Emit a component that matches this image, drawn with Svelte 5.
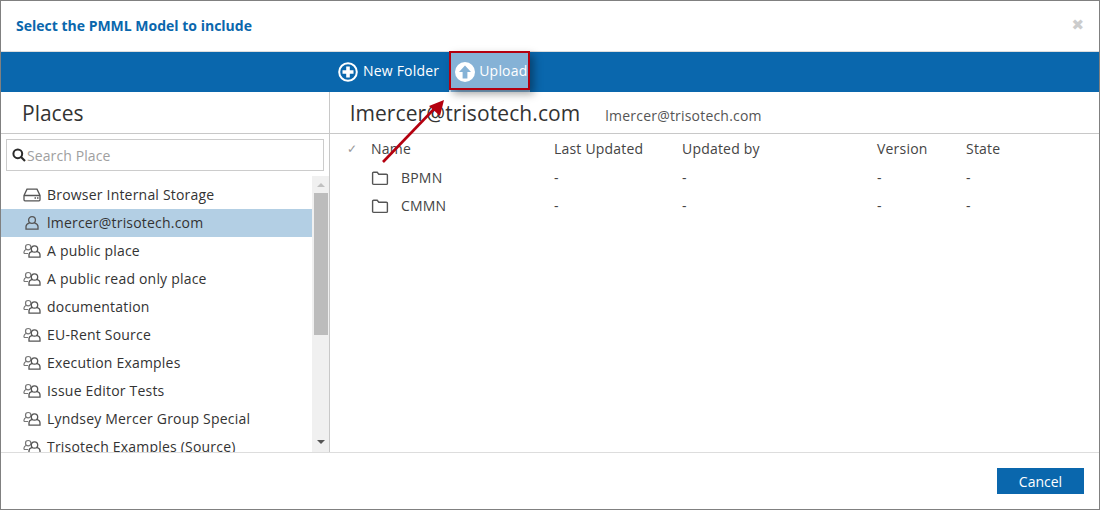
<script lang="ts">
	const places = [
		{ label: "Browser Internal Storage", icon: "drive" },
		{ label: "lmercer@trisotech.com", icon: "user", active: true },
		{ label: "A public place", icon: "group" },
		{ label: "A public read only place", icon: "group" },
		{ label: "documentation", icon: "group" },
		{ label: "EU-Rent Source", icon: "group" },
		{ label: "Execution Examples", icon: "group" },
		{ label: "Issue Editor Tests", icon: "group" },
		{ label: "Lyndsey Mercer Group Special", icon: "group" },
		{ label: "Trisotech Examples (Source)", icon: "group" },
	];

	const folders = ["BPMN", "CMMN"];
</script>

<div class="dialog">
	<header class="title-bar">
		<h1>Select the PMML Model to include</h1>
		<span class="close">✖</span>
	</header>

	<div class="toolbar">
		<button type="button" class="tool new-folder">
			<svg width="20" height="20" viewBox="0 0 20 20">
				<circle cx="10" cy="10" r="8.8" fill="none" stroke="#fff" stroke-width="2" />
				<path d="M10 4.5v11M4.5 10h11" stroke="#fff" stroke-width="3.6" />
			</svg>
			New Folder
		</button>
		<button type="button" class="tool upload">
			<svg width="20" height="20" viewBox="0 0 20 20">
				<circle cx="10" cy="10" r="10" fill="#fff" />
				<path d="M10 3.5 16 10h-3.6v6.5H7.6V10H4z" fill="#85b2d6" />
			</svg>
			Upload
		</button>
	</div>

	<div class="body">
		<aside class="places">
			<h2>Places</h2>
			<div class="search">
				<svg width="14" height="14" viewBox="0 0 14 14">
					<circle cx="5.8" cy="5.8" r="4.4" fill="none" stroke="#2b2b2b" stroke-width="2" />
					<path d="M9 9l4 4" stroke="#2b2b2b" stroke-width="2.2" />
				</svg>
				<span>Search Place</span>
			</div>
			<div class="list-wrap">
				<ul>
					{#each places as place}
						<li class:active={place.active}>
							<span class="place-icon">
								{#if place.icon === "drive"}
									<svg width="18" height="16" viewBox="0 0 18 16" fill="none" stroke="#555" stroke-width="1.3">
										<path d="M1 8.5 4 2.2h10l3 6.3v4.3a1 1 0 0 1-1 1H2a1 1 0 0 1-1-1zM1 8.5h16" />
										<path d="M11.5 11h1.5M14 11h1.5" stroke-width="1.4" />
									</svg>
								{:else if place.icon === "user"}
									<svg width="18" height="16" viewBox="0 0 18 16" fill="none" stroke="#555" stroke-width="1.3">
										<circle cx="9" cy="5" r="3.4" />
										<path d="M6.6 7.8C4.6 8.5 3 9.6 3 11.5v2.6h12v-2.6c0-1.9-1.6-3-3.6-3.7" />
									</svg>
								{:else}
									<svg width="18" height="16" viewBox="0 0 18 16" fill="none">
										<g stroke="#777" stroke-width="1.2">
											<circle cx="5.2" cy="4.2" r="2.7" />
											<path d="M1 10.5V9c0-1.3.8-2.1 2.4-2.8M1 10.5h4" />
										</g>
										<g stroke="#555" stroke-width="1.3">
											<circle cx="11.5" cy="6" r="3.2" />
											<path d="M9.3 8.4C7.2 9 6 10 6 11.8v2.4h11v-2.4c0-1.8-1.2-2.8-3.3-3.4" />
										</g>
									</svg>
								{/if}
							</span>
							{place.label}
						</li>
					{/each}
				</ul>
				<div class="scrollbar">
					<span class="arrow up"></span>
					<span class="thumb"></span>
					<span class="arrow down"></span>
				</div>
			</div>
		</aside>

		<main class="files">
			<div class="crumb">
				<span class="crumb-name">lmercer@trisotech.com</span>
				<span class="crumb-sub">lmercer@trisotech.com</span>
			</div>
			<div class="row head">
				<span class="check">✓</span>
				<span>Name</span>
				<span>Last Updated</span>
				<span>Updated by</span>
				<span>Version</span>
				<span>State</span>
			</div>
			{#each folders as folder}
				<div class="row">
					<span></span>
					<span class="folder">
						<svg width="18" height="15" viewBox="0 0 18 15" fill="none" stroke="#555" stroke-width="1.4">
							<path d="M1.6 2.2a1 1 0 0 1 1-1h3.6l1.6 2h7.6a1 1 0 0 1 1 1v8.2a1 1 0 0 1-1 1H2.6a1 1 0 0 1-1-1z" />
						</svg>
						{folder}
					</span>
					<span>-</span>
					<span>-</span>
					<span>-</span>
					<span>-</span>
				</div>
			{/each}
		</main>
	</div>

	<footer>
		<button type="button" class="cancel">Cancel</button>
	</footer>

	<!-- annotation drawn over the screenshot -->
	<div class="callout"></div>
	<svg class="arrow-note" width="80" height="80" viewBox="0 0 80 80">
		<path d="M2 71 54 17" stroke="#b4000f" stroke-width="2.6" />
		<path d="M63 9 59 25 48 15z" fill="#b4000f" />
	</svg>
</div>

<style>
	:global(body) {
		margin: 0;
		font-family: "Open Sans", "Liberation Sans", sans-serif;
		color: #333;
	}

	.dialog {
		position: relative;
		display: flex;
		flex-direction: column;
		box-sizing: border-box;
		width: 1100px;
		height: 510px;
		border: 1px solid #808080;
		background: #fff;
		overflow: hidden;
	}

	.title-bar {
		display: flex;
		align-items: center;
		justify-content: space-between;
		flex: 0 0 50px;
		box-sizing: content-box;
		padding: 0 15px;
		border-bottom: 1px solid #ddd;
	}

	h1 {
		margin: 0 0 2px;
		font-size: 14px;
		font-weight: 700;
		color: #0a67ad;
	}

	.close {
		margin: 0 0 2px;
		font-size: 15px;
		color: #ccc;
		font-family: "DejaVu Sans", sans-serif;
	}

	.toolbar {
		display: flex;
		align-items: center;
		flex: 0 0 40px;
		padding-left: 328px;
		background: #0a67ad;
	}

	.tool {
		display: flex;
		align-items: center;
		gap: 5px;
		height: 40px;
		border: 0;
		background: transparent;
		color: #fff;
		font: inherit;
		font-size: 14px;
		letter-spacing: 0.2px;
		padding: 0 9px 3px;
	}

	.tool svg {
		margin-top: 3px;
	}

	.upload {
		width: 81px;
		padding: 0 0 3px 4px;
		gap: 4px;
		margin-left: 1px;
		background: #85b2d6;
		border-left: 2px solid #c3d9ea;
		box-sizing: border-box;
	}

	.body {
		display: flex;
		flex: 1;
		min-height: 0;
	}

	.places {
		display: flex;
		flex-direction: column;
		flex: 0 0 329px;
		box-sizing: border-box;
		border-right: 1px solid #c8c8c8;
	}

	h2 {
		margin: 0;
		flex: 0 0 42px;
		box-sizing: border-box;
		padding: 1px 0 0 21px;
		border-bottom: 1px solid #c8c8c8;
		font-size: 21px;
		font-weight: 400;
		line-height: 40px;
		color: #333;
	}

	.search {
		display: flex;
		align-items: center;
		gap: 1px;
		height: 30px;
		margin: 5px 5px 5px 5px;
		padding-left: 5px;
		border: 1px solid #ccc;
		font-size: 14px;
		color: #a0a0a0;
		letter-spacing: 0.1px;
	}

	.list-wrap {
		display: flex;
		flex: 1;
		min-height: 0;
	}

	ul {
		flex: 1;
		margin: 0;
		padding: 5px 0 0;
		list-style: none;
		overflow: hidden;
	}

	li {
		display: flex;
		align-items: center;
		gap: 5px;
		height: 28px;
		box-sizing: border-box;
		padding: 0 0 2px 22px;
		font-size: 14px;
		letter-spacing: 0.2px;
		color: #333;
		white-space: nowrap;
	}

	li.active {
		background: #b3cfe4;
	}

	.place-icon {
		display: flex;
		width: 19px;
		margin-top: 2px;
	}

	.scrollbar {
		display: flex;
		flex-direction: column;
		align-items: center;
		flex: 0 0 17px;
		background: #f0f0f0;
	}

	.thumb {
		width: 14px;
		height: 142px;
		background: #bcbcbc;
	}

	.arrow {
		width: 0;
		height: 0;
		border-left: 4px solid transparent;
		border-right: 4px solid transparent;
	}

	.arrow.up {
		margin: 7px 0 6px;
		border-bottom: 4px solid #c0c0c0;
	}

	.arrow.down {
		margin-top: 105px;
		border-top: 4px solid #555;
	}

	.files {
		flex: 1;
		min-width: 0;
	}

	.crumb {
		display: flex;
		align-items: baseline;
		gap: 25px;
		height: 41px;
		padding-left: 20px;
		border-bottom: 1px solid #c8c8c8;
		box-sizing: content-box;
		line-height: 42px;
	}

	.crumb-name {
		font-size: 21px;
		letter-spacing: 0.1px;
		color: #333;
	}

	.crumb-sub {
		font-size: 14px;
		letter-spacing: 0.2px;
		color: #555;
	}

	.row {
		display: grid;
		grid-template-columns: 41px 183px 128px 195px 89px 1fr;
		align-items: center;
		height: 28px;
		box-sizing: border-box;
		padding-bottom: 2px;
		font-size: 14px;
		letter-spacing: 0.2px;
		color: #444;
	}

	.row.head {
		height: 30px;
		color: #444;
	}

	.check {
		padding-left: 17px;
		font-size: 12px;
		color: #999;
	}

	.folder {
		display: flex;
		align-items: center;
		gap: 12px;
	}

	.folder svg {
		margin-top: 2px;
	}

	footer {
		display: flex;
		justify-content: flex-end;
		align-items: flex-start;
		flex: 0 0 57px;
		box-sizing: border-box;
		padding: 15px 15px 0 0;
		border-top: 1px solid #ddd;
	}

	.cancel {
		width: 87px;
		height: 26px;
		border: 0;
		background: #0a67ad;
		color: #fff;
		font: inherit;
		font-size: 14px;
	}

	.callout {
		position: absolute;
		left: 448px;
		top: 50px;
		width: 81px;
		height: 39px;
		box-sizing: border-box;
		border: 2px solid #b4000f;
		box-shadow: 4px 4px 8px rgba(0, 0, 0, 0.35);
	}

	.arrow-note {
		position: absolute;
		left: 380px;
		top: 90px;
	}
</style>
